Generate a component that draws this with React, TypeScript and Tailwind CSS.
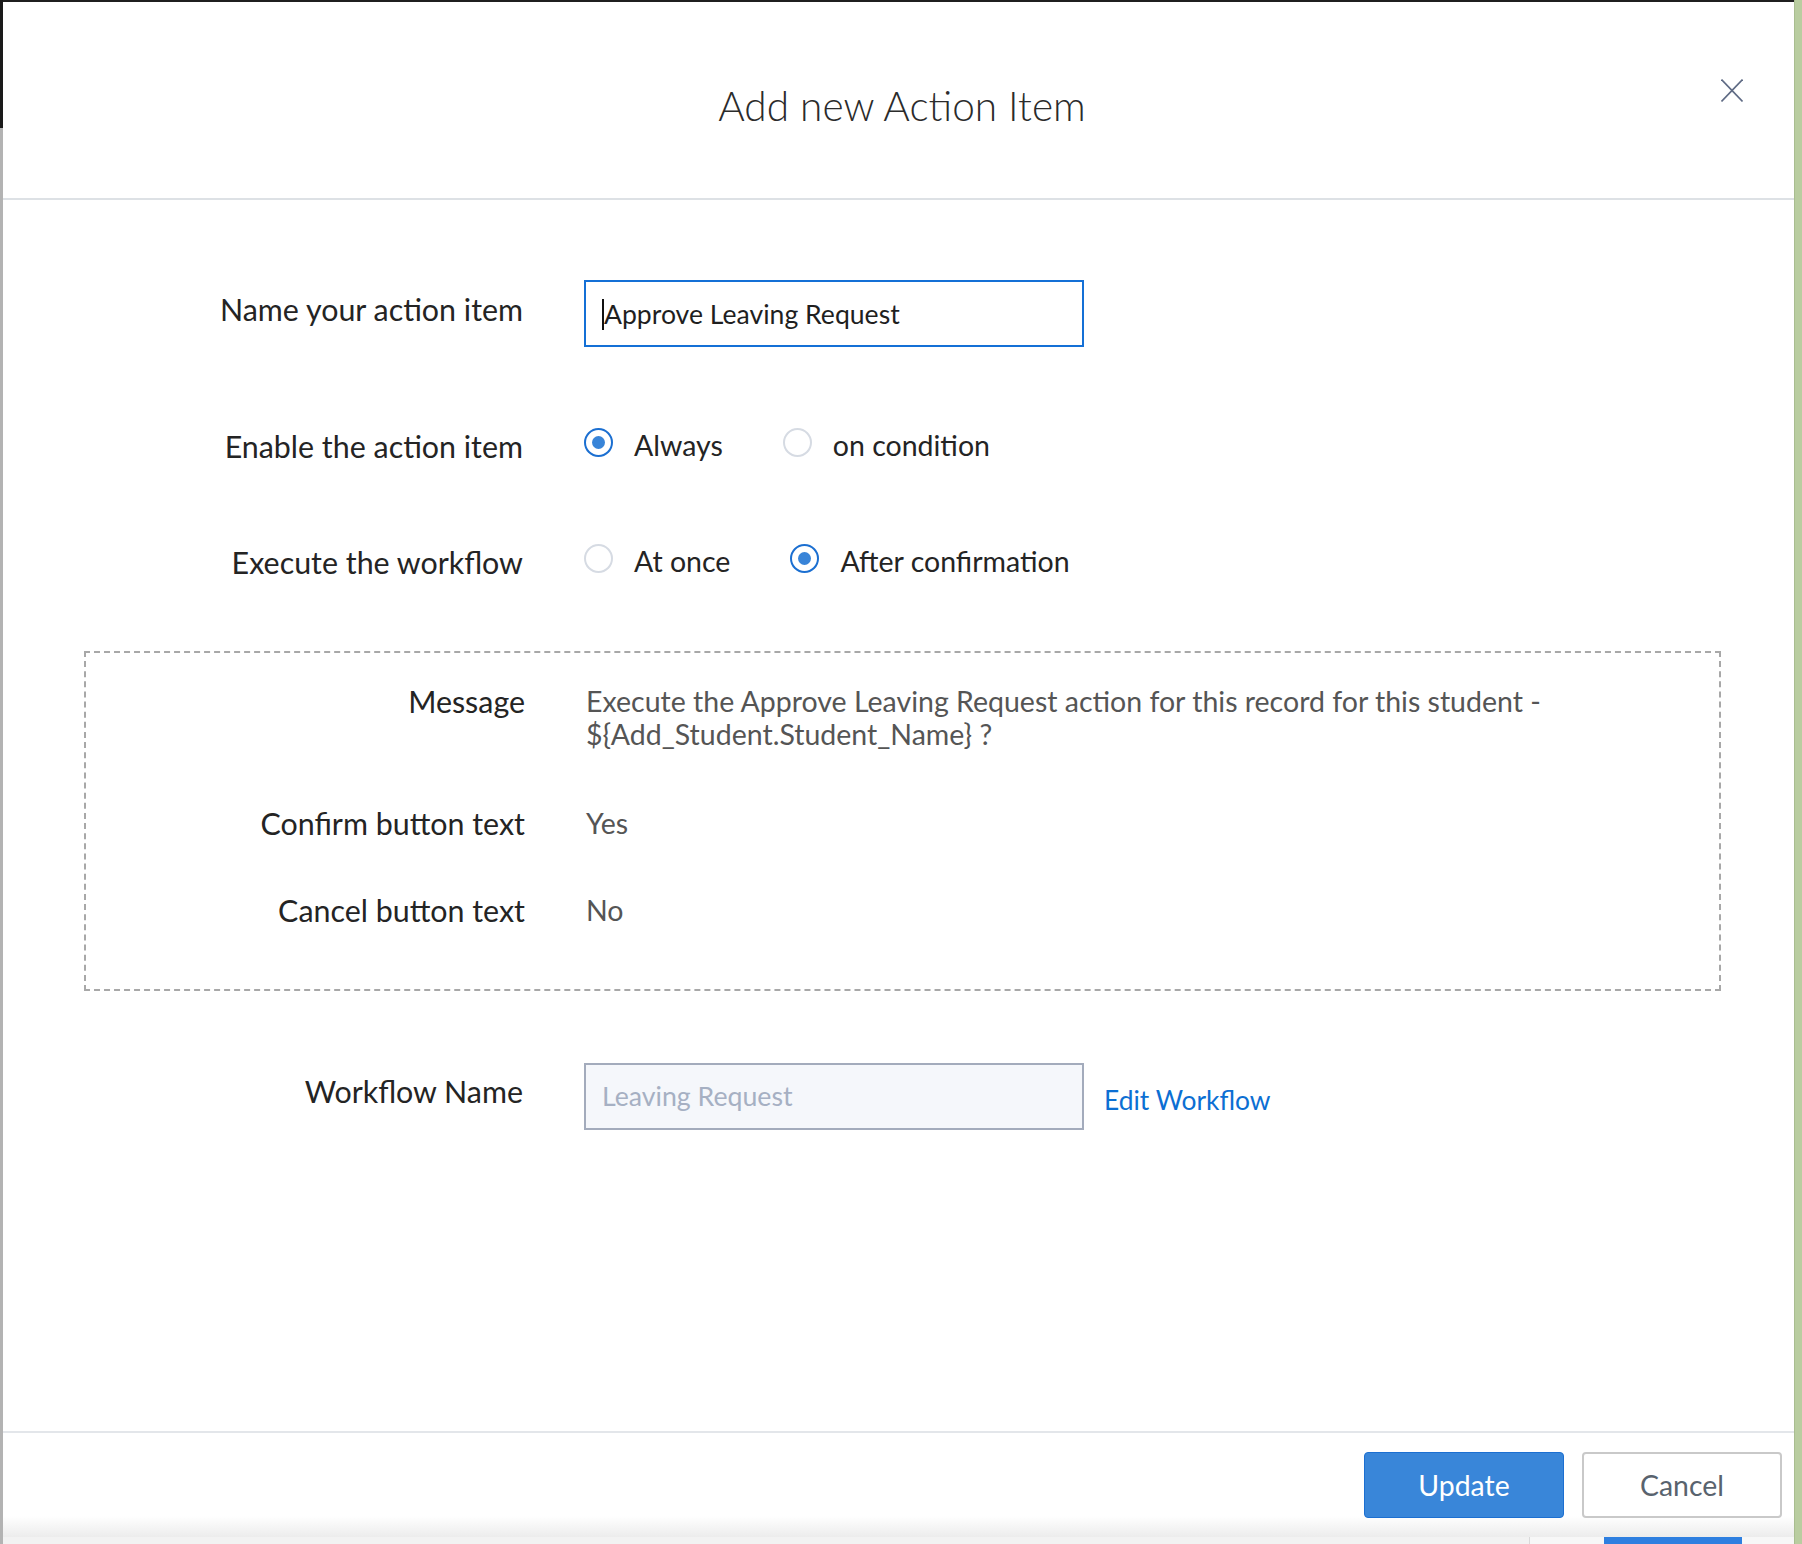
import React from "react";

function Radio({ checked }: { checked: boolean }) {
  return checked ? (
    <span className="w-[29px] h-[29px] shrink-0 rounded-full border-2 border-[#1b6fd1] bg-white flex items-center justify-center">
      <span className="w-[13px] h-[13px] rounded-full bg-[#3884d8]" />
    </span>
  ) : (
    <span className="w-[29px] h-[29px] shrink-0 rounded-full border-2 border-[#d6dbe3] bg-white" />
  );
}

function Option({ checked, label }: { checked: boolean; label: string }) {
  return (
    <div className="flex items-start mr-[60px]">
      <Radio checked={checked} />
      <span className="ml-[21px] text-[28.5px] leading-[34px] text-[#242424]">{label}</span>
    </div>
  );
}

export default function App() {
  return (
    <div className="w-[1802px] h-[1544px] flex bg-white overflow-hidden [font-family:Lato,sans-serif] text-[#242424]">
      {/* left background edge */}
      <div className="w-[3px] flex flex-col">
        <div className="h-[128px] bg-[#1a1a1a]" />
        <div className="flex-1 bg-[#b3b3b3]" />
      </div>

      {/* centre column */}
      <div className="flex-1 flex flex-col">
        <div className="h-[2px] bg-[#1f1f1f]" />

        {/* modal */}
        <div className="flex-1 flex flex-col bg-white">
          {/* header */}
          <div className="relative h-[198px] border-b-2 border-[#dde1e5] pt-[80px] pl-[7px] flex justify-center">
            <h1 className="text-[40.6px] leading-[48px] font-light text-[#2b2b2b]">Add new Action Item</h1>
            <button className="absolute right-[51px] top-[77px] w-[22px] h-[23px]" aria-label="Close">
              <svg viewBox="0 0 22 23" width="22" height="23" fill="none" stroke="#5e6a84" strokeWidth="1.6">
                <line x1="0.5" y1="0.5" x2="21.5" y2="22.5" />
                <line x1="21.5" y1="0.5" x2="0.5" y2="22.5" />
              </svg>
            </button>
          </div>

          {/* body */}
          <div className="flex flex-col">
            {/* name */}
            <div className="mt-[80px] flex items-start">
              <div className="w-[520px] mt-[11px] text-right text-[30.4px] leading-[36px]">Name your action item</div>
              <div className="ml-[61px] w-[500px] h-[67px] border-2 border-[#1470d6] flex items-center pl-[16px] pt-[2px] text-[26.6px] text-[#1f1f1f]">
                <span className="inline-block w-[1.5px] h-[31px] bg-[#111] mr-[0.5px]" />
                <span>Approve Leaving Request</span>
              </div>
            </div>

            {/* enable */}
            <div className="mt-[81px] flex items-start">
              <div className="w-[520px] text-right text-[30.4px] leading-[36px]">Enable the action item</div>
              <div className="ml-[61px] flex">
                <Option checked label="Always" />
                <Option checked={false} label="on condition" />
              </div>
            </div>

            {/* execute */}
            <div className="mt-[80px] flex items-start">
              <div className="w-[520px] text-right text-[30.4px] leading-[36px]">Execute the workflow</div>
              <div className="ml-[61px] flex">
                <Option checked={false} label="At once" />
                <Option checked label="After confirmation" />
              </div>
            </div>

            {/* confirmation box */}
            <div className="mt-[71px] ml-[81px] mr-[73px] border-2 border-dashed border-[#a8a8a8] pt-[30px] pb-[61px] flex flex-col">
              <div className="flex items-start">
                <div className="w-[439px] text-right text-[30.4px] leading-[36px]">Message</div>
                <div className="ml-[61px] mt-[2px] w-[1050px] text-[28.5px] leading-[33px] text-[#555555]">
                  Execute the Approve Leaving Request action for this record for this student - ${"{"}Add_Student.Student_Name{"}"} ?
                </div>
              </div>
              <div className="mt-[54px] flex items-start">
                <div className="w-[439px] text-right text-[30.4px] leading-[36px]">Confirm button text</div>
                <div className="ml-[61px] mt-[1px] text-[28.5px] leading-[34px] text-[#555555]">Yes</div>
              </div>
              <div className="mt-[51px] flex items-start">
                <div className="w-[439px] text-right text-[30.4px] leading-[36px]">Cancel button text</div>
                <div className="ml-[61px] mt-[1px] text-[28.5px] leading-[34px] text-[#555555]">No</div>
              </div>
            </div>

            {/* workflow name */}
            <div className="mt-[72px] flex items-start">
              <div className="w-[520px] mt-[10px] text-right text-[30.4px] leading-[36px]">Workflow Name</div>
              <div className="ml-[61px] w-[500px] h-[67px] border-2 border-[#a3abbc] bg-[#f5f7fb] flex items-center pl-[16px] text-[26.7px] text-[#a6b0c3]">
                Leaving Request
              </div>
              <a className="ml-[20px] mt-[22px] text-[26.4px] leading-[31px] text-[#0c6fd3] cursor-pointer">Edit Workflow</a>
            </div>
          </div>

          {/* footer */}
          <div className="mt-auto h-[106px] border-t-2 border-[#e3e6ea] pt-[19px] pr-[12px] flex justify-end items-start gap-[18px] bg-linear-to-b from-white from-80% to-[#ececec]">
            <button className="w-[200px] h-[66px] rounded-[4px] bg-[#3986d9] border border-[#1c6fd1] text-white text-[28.4px]">
              Update
            </button>
            <button className="w-[200px] h-[66px] rounded-[4px] bg-white border-2 border-[#c9c9c9] text-[#59636e] text-[28.4px]">
              Cancel
            </button>
          </div>
        </div>

        {/* background page strip at bottom */}
        <div className="h-[7px] flex bg-[#f4f4f4]">
          <div className="w-[1526px] bg-[#f2f2f2]" />
          <div className="w-[1px] bg-[#d9d9d9]" />
          <div className="w-[74px] bg-[#f7f7f7]" />
          <div className="w-[138px] bg-[#2e7fe0]" />
          <div className="flex-1 bg-[#f7f7f7]" />
        </div>
      </div>

      {/* right background edge */}
      <div className="w-[8px] bg-[#b9cda0] border-l border-[#a9bd90]" />
    </div>
  );
}
